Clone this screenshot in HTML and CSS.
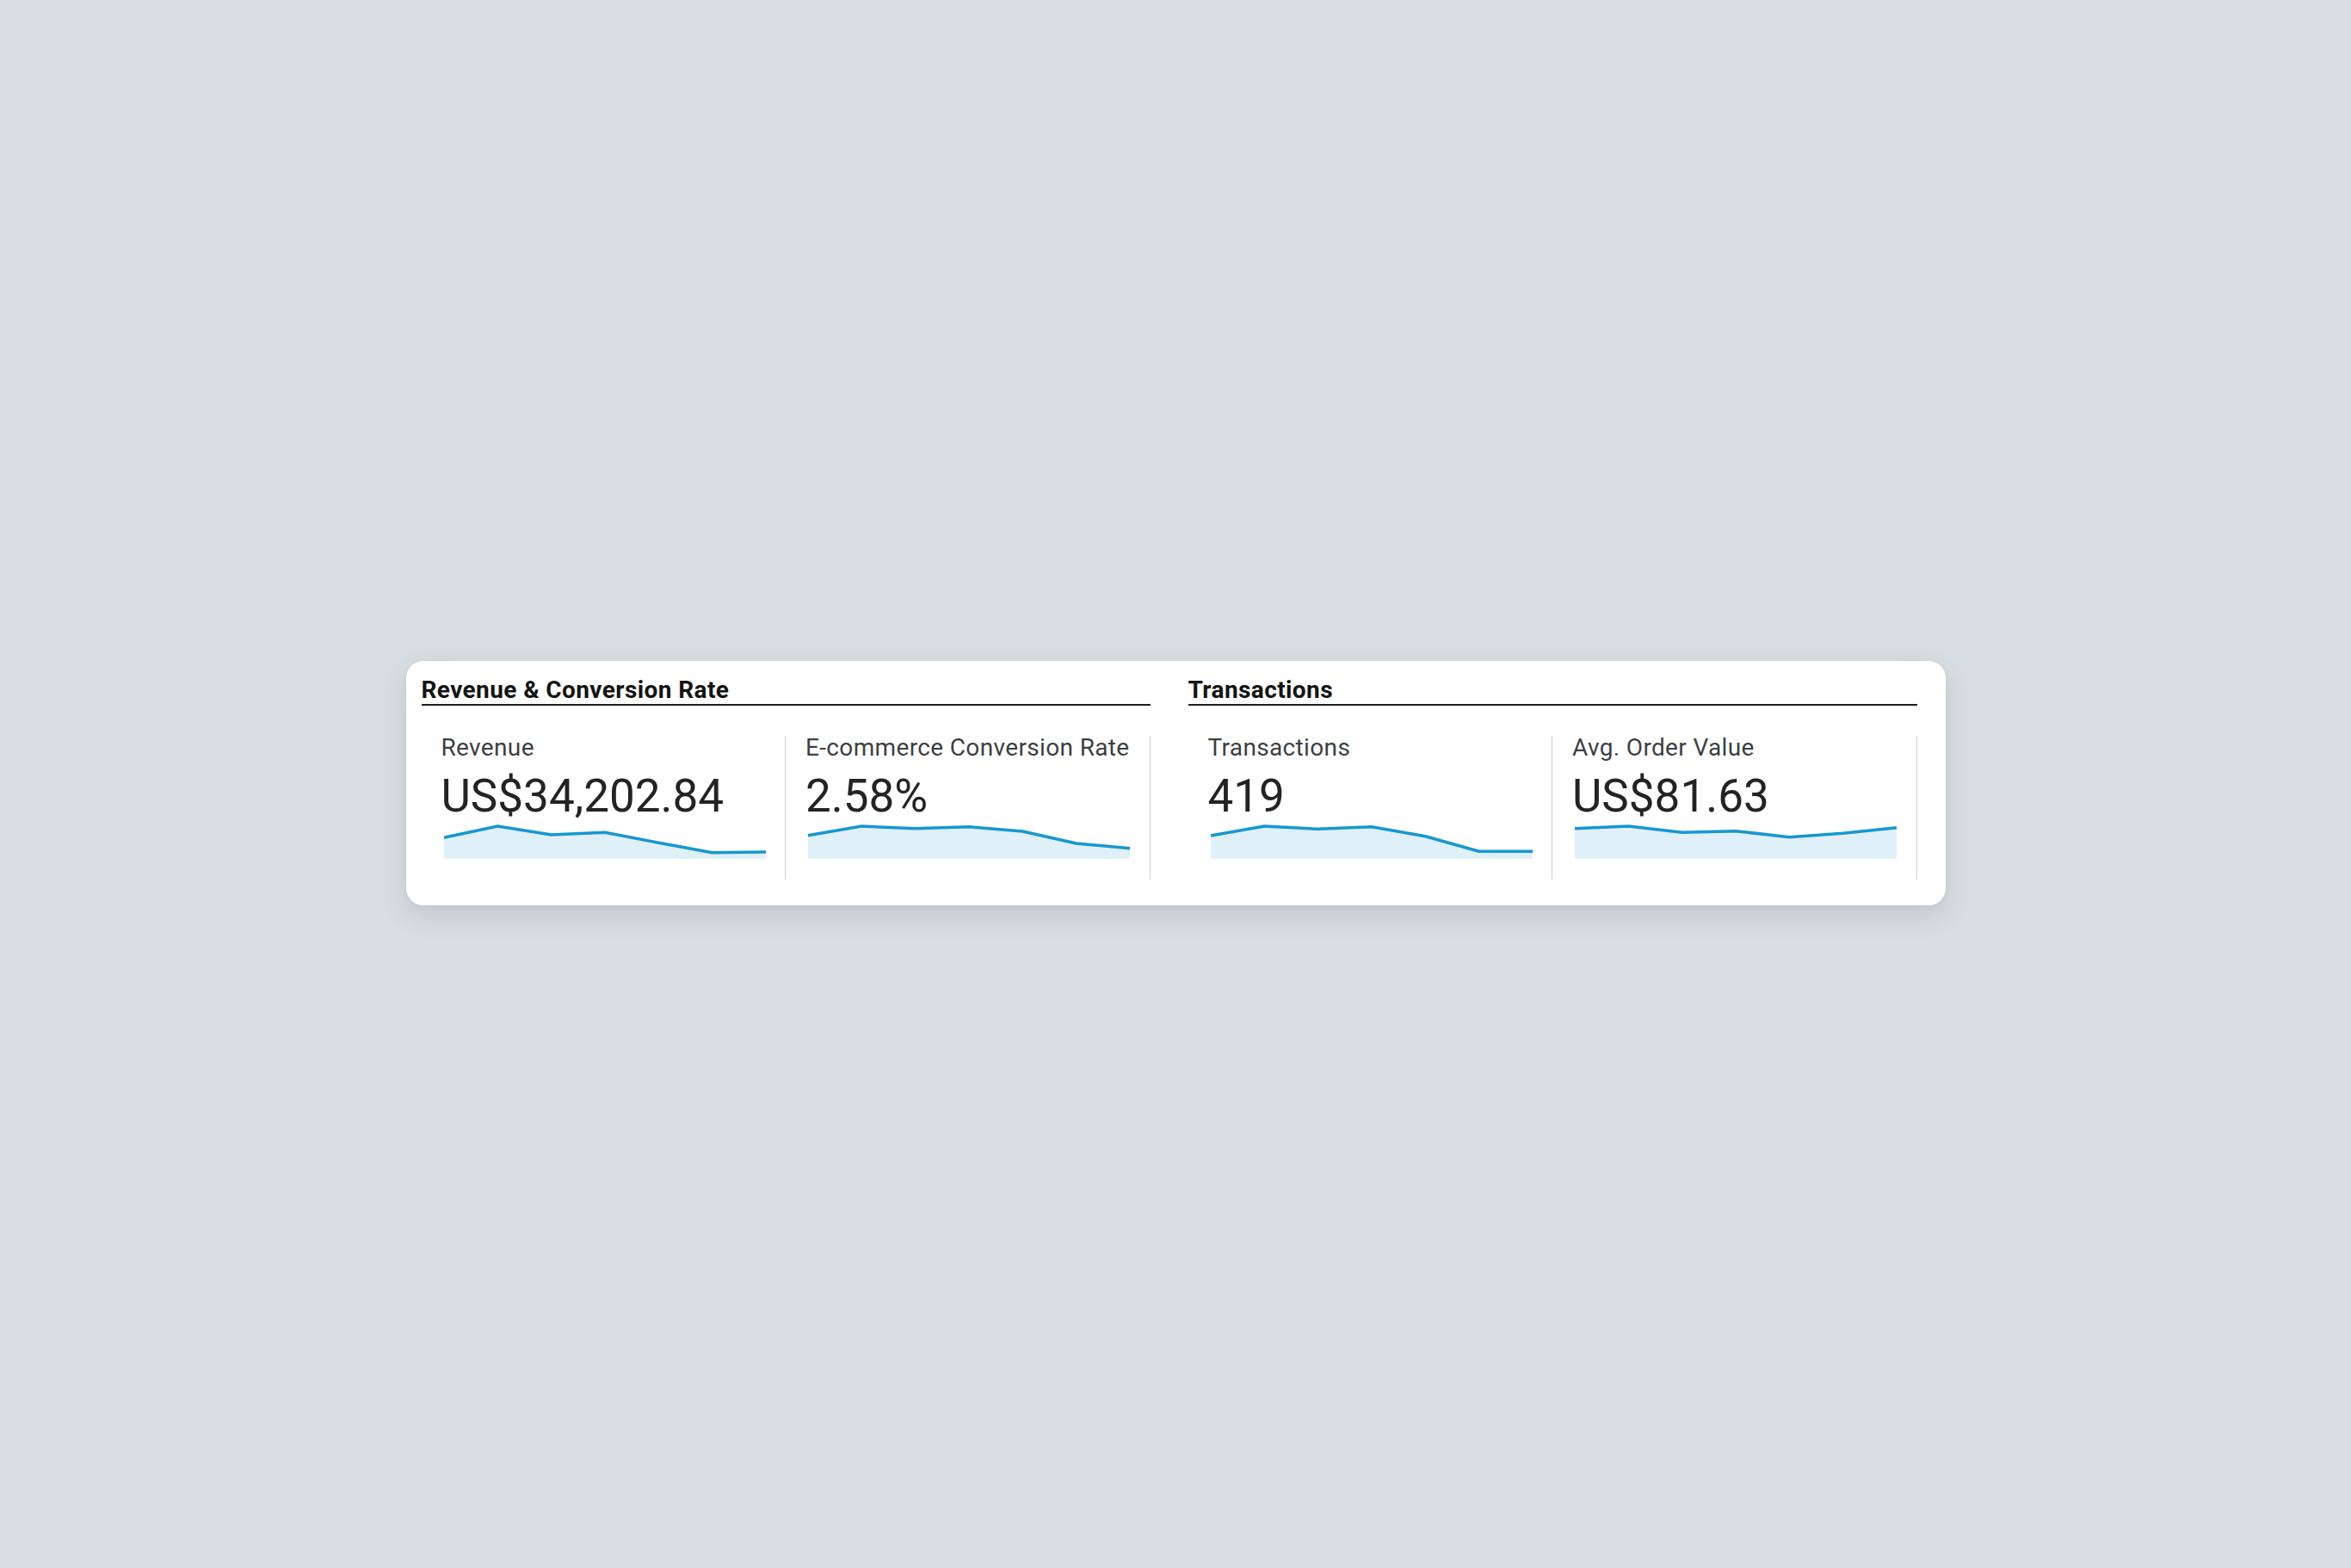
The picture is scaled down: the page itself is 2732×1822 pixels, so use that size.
FILE: index.html
```html
<!DOCTYPE html>
<html lang="en">
<head>
<meta charset="utf-8">
<title>Ecommerce Overview</title>
<link rel="stylesheet" href="styles.css">
</head>
<body>
<div class="card">
  <section class="group">
    <h2 class="group-title">Revenue &amp; Conversion Rate</h2>
    <div class="metrics">
      <div class="metric">
        <div class="metric-label">Revenue</div>
        <div class="metric-value">US$34,202.84</div>
        <svg class="spark" width="374" height="40" viewBox="0 0 374 40">
          <polygon class="spark-area" points="0,40 0,15.3 62.33,2 124.67,12 187,9.3 249.33,21.3 311.67,32.7 374,32 374,40"/>
          <polyline class="spark-line" points="0,15.3 62.33,2 124.67,12 187,9.3 249.33,21.3 311.67,32.7 374,32"/>
        </svg>
      </div>
      <div class="metric">
        <div class="metric-label">E-commerce Conversion Rate</div>
        <div class="metric-value">2.58%</div>
        <svg class="spark" width="374" height="40" viewBox="0 0 374 40">
          <polygon class="spark-area" points="0,40 0,12.7 62.33,2 124.67,4.7 187,2.7 249.33,8 311.67,22 374,27.7 374,40"/>
          <polyline class="spark-line" points="0,12.7 62.33,2 124.67,4.7 187,2.7 249.33,8 311.67,22 374,27.7"/>
        </svg>
      </div>
    </div>
  </section>
  <section class="group">
    <h2 class="group-title">Transactions</h2>
    <div class="metrics">
      <div class="metric">
        <div class="metric-label">Transactions</div>
        <div class="metric-value">419</div>
        <svg class="spark" width="374" height="40" viewBox="0 0 374 40">
          <polygon class="spark-area" points="0,40 0,13 62.33,2 124.67,5.3 187,2.7 249.33,13.7 311.67,31.3 374,31.3 374,40"/>
          <polyline class="spark-line" points="0,13 62.33,2 124.67,5.3 187,2.7 249.33,13.7 311.67,31.3 374,31.3"/>
        </svg>
      </div>
      <div class="metric">
        <div class="metric-label">Avg. Order Value</div>
        <div class="metric-value">US$81.63</div>
        <svg class="spark" width="374" height="40" viewBox="0 0 374 40">
          <polygon class="spark-area" points="0,40 0,4.7 62.33,2 124.67,9.3 187,7.7 249.33,14.7 311.67,10.3 374,3.7 374,40"/>
          <polyline class="spark-line" points="0,4.7 62.33,2 124.67,9.3 187,7.7 249.33,14.7 311.67,10.3 374,3.7"/>
        </svg>
      </div>
    </div>
  </section>
</div>
</body>
</html>
```

FILE: styles.css
```css
html, body {
  margin: 0;
  padding: 0;
}

body {
  background: #d8dde1;
  font-family: Roboto, "Liberation Sans", Arial, sans-serif;
  min-height: 100vh;
  box-sizing: border-box;
  padding-bottom: 3px;
  display: flex;
  align-items: center;
  justify-content: center;
}

.card {
  background: #ffffff;
  border-radius: 20px;
  padding: 18px 33px 30px 18px;
  display: flex;
  gap: 44px;
  box-shadow: 0 12px 30px rgba(70, 80, 95, 0.14), 0 2px 6px rgba(70, 80, 95, 0.06);
}

.group {
  width: 847px;
}

.group-title {
  margin: 0;
  font-size: 28px;
  line-height: 32px;
  font-weight: 700;
  letter-spacing: 0.4px;
  color: #141414;
  border-bottom: 2px solid #1e1e1e;
}

.metrics {
  display: flex;
  margin-top: 35px;
}

.metric {
  flex: 1;
  border-right: 1px solid #cfcfcf;
  padding: 0 22px 24px 23px;
  min-width: 0;
}

.metric-label {
  font-size: 28px;
  line-height: 28px;
  letter-spacing: 0.35px;
  color: #3c3f43;
  white-space: nowrap;
}

.metric-value {
  margin-top: 16px;
  font-size: 53px;
  line-height: 53px;
  color: #222325;
  white-space: nowrap;
}

.spark {
  display: block;
  margin: 6px 0 0 3px;
  overflow: visible;
}

.spark-area {
  fill: #dff0f8;
}

.spark-line {
  fill: none;
  stroke: #1797d2;
  stroke-width: 3.5;
  stroke-linejoin: round;
}
```
